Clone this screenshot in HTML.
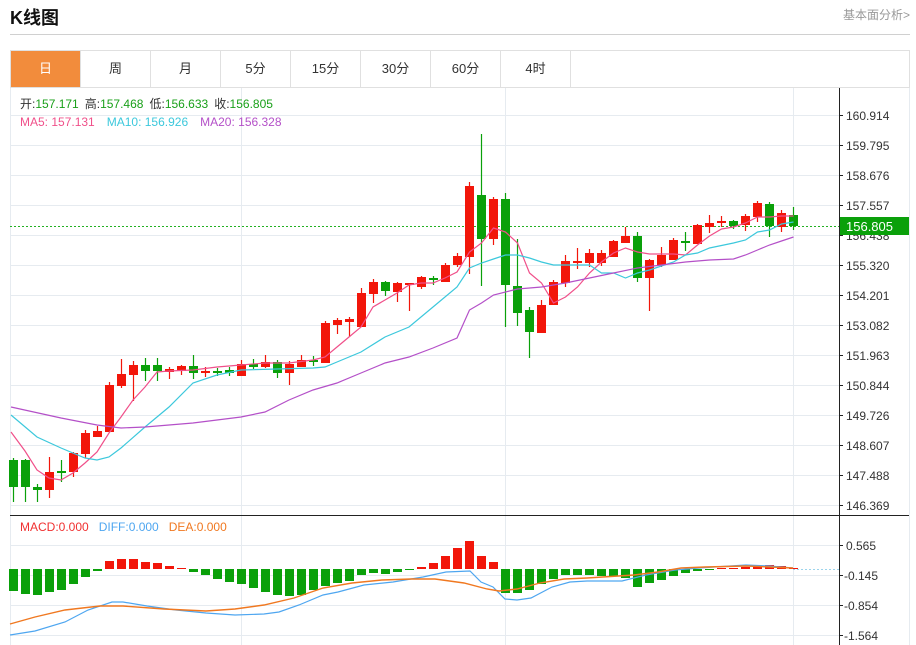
<!DOCTYPE html>
<html><head><meta charset="utf-8"><style>
body{margin:0;width:916px;height:645px;background:#fff;overflow:hidden;position:relative;font-family:"Liberation Sans","Noto Sans CJK SC",sans-serif}
.t{position:absolute;left:10px;top:4px;font-size:18px;font-weight:bold;color:#111}
.r{position:absolute;right:6px;top:6px;font-size:12px;color:#999}
.hl{position:absolute;left:10px;top:34px;width:900px;height:1px;background:#d0d0d0}
.tabs{position:absolute;left:10px;top:50px;width:898px;height:36px;border:1px solid #e0e0e0;display:flex}
.tabs div{width:69px;border-right:1px solid #e0e0e0;text-align:center;line-height:36px;font-size:13px;color:#333}
.tabs div.a{background:#f28c3c;color:#fff}
svg{position:absolute;left:0;top:0}
</style></head><body>
<div class="t">K线图</div><div class="r">基本面分析&gt;</div><div class="hl"></div>
<div class="tabs"><div class="a">日</div><div>周</div><div>月</div><div>5分</div><div>15分</div><div>30分</div><div>60分</div><div>4时</div></div>
<svg width="916" height="645" viewBox="0 0 916 645" font-family="Liberation Sans, Noto Sans CJK SC, sans-serif">
<g stroke="#e6ebf0" stroke-width="1">
<line x1="10" y1="115.5" x2="839" y2="115.5"/><line x1="10" y1="145.5" x2="839" y2="145.5"/><line x1="10" y1="175.5" x2="839" y2="175.5"/><line x1="10" y1="205.5" x2="839" y2="205.5"/><line x1="10" y1="235.5" x2="839" y2="235.5"/><line x1="10" y1="265.5" x2="839" y2="265.5"/><line x1="10" y1="295.5" x2="839" y2="295.5"/><line x1="10" y1="325.5" x2="839" y2="325.5"/><line x1="10" y1="355.5" x2="839" y2="355.5"/><line x1="10" y1="385.5" x2="839" y2="385.5"/><line x1="10" y1="415.5" x2="839" y2="415.5"/><line x1="10" y1="445.5" x2="839" y2="445.5"/><line x1="10" y1="475.5" x2="839" y2="475.5"/><line x1="10" y1="505.5" x2="839" y2="505.5"/>
<line x1="10" y1="545.5" x2="839" y2="545.5"/><line x1="10" y1="575.5" x2="839" y2="575.5"/><line x1="10" y1="605.5" x2="839" y2="605.5"/><line x1="10" y1="635.5" x2="839" y2="635.5"/>
<line x1="241.5" y1="88" x2="241.5" y2="645"/><line x1="505.5" y1="88" x2="505.5" y2="645"/><line x1="793.5" y1="88" x2="793.5" y2="645"/>
<line x1="10.5" y1="88" x2="10.5" y2="645"/><line x1="909.5" y1="88" x2="909.5" y2="645"/>
</g>
<line x1="10" y1="515.5" x2="909" y2="515.5" stroke="#222"/>
<line x1="839.5" y1="88" x2="839.5" y2="645" stroke="#222"/>
<g stroke="#222">
<line x1="839" y1="115.5" x2="843" y2="115.5"/><line x1="839" y1="145.5" x2="843" y2="145.5"/><line x1="839" y1="175.5" x2="843" y2="175.5"/><line x1="839" y1="205.5" x2="843" y2="205.5"/><line x1="839" y1="235.5" x2="843" y2="235.5"/><line x1="839" y1="265.5" x2="843" y2="265.5"/><line x1="839" y1="295.5" x2="843" y2="295.5"/><line x1="839" y1="325.5" x2="843" y2="325.5"/><line x1="839" y1="355.5" x2="843" y2="355.5"/><line x1="839" y1="385.5" x2="843" y2="385.5"/><line x1="839" y1="415.5" x2="843" y2="415.5"/><line x1="839" y1="445.5" x2="843" y2="445.5"/><line x1="839" y1="475.5" x2="843" y2="475.5"/><line x1="839" y1="505.5" x2="843" y2="505.5"/>
<line x1="839" y1="545.5" x2="843" y2="545.5"/><line x1="839" y1="575.5" x2="843" y2="575.5"/><line x1="839" y1="605.5" x2="843" y2="605.5"/><line x1="839" y1="635.5" x2="843" y2="635.5"/>
</g>
<g font-size="12" fill="#333">
<text x="846" y="120">160.914</text><text x="846" y="150">159.795</text><text x="846" y="180">158.676</text><text x="846" y="210">157.557</text><text x="846" y="240">156.438</text><text x="846" y="270">155.320</text><text x="846" y="300">154.201</text><text x="846" y="330">153.082</text><text x="846" y="360">151.963</text><text x="846" y="390">150.844</text><text x="846" y="420">149.726</text><text x="846" y="450">148.607</text><text x="846" y="480">147.488</text><text x="846" y="510">146.369</text>
<text x="846" y="550">0.565</text><text x="844" y="580">-0.145</text><text x="844" y="610">-0.854</text><text x="844" y="640">-1.564</text>
</g>
<line x1="10" y1="226.5" x2="839" y2="226.5" stroke="#22b022" stroke-dasharray="2,2"/>
<rect x="840" y="217" width="69" height="18" fill="#0aa00a"/>
<text x="846" y="231" font-size="13" fill="#fff">156.805</text>
<line x1="793" y1="569.5" x2="839" y2="569.5" stroke="#9cd4ec" stroke-dasharray="2,2"/>
<g font-size="12">
<text x="20" y="108"><tspan fill="#333">开:</tspan><tspan fill="#1aa01a">157.171</tspan><tspan fill="#333" dx="6">高:</tspan><tspan fill="#1aa01a">157.468</tspan><tspan fill="#333" dx="6">低:</tspan><tspan fill="#1aa01a">156.633</tspan><tspan fill="#333" dx="6">收:</tspan><tspan fill="#1aa01a">156.805</tspan></text>
<text x="20" y="126"><tspan fill="#f0508a">MA5: 157.131</tspan><tspan fill="#3cc8dc" dx="12">MA10: 156.926</tspan><tspan fill="#b450c8" dx="12">MA20: 156.328</tspan></text>
<text x="20" y="531"><tspan fill="#f03030">MACD:0.000</tspan><tspan fill="#4ea6f0" dx="10">DIFF:0.000</tspan><tspan fill="#f07820" dx="10">DEA:0.000</tspan></text>
</g>
<!-- red candles -->
<path fill="none" stroke="#f2160a" stroke-width="1.2" d="M49.5 457V498M73.5 452V477M85.5 430V458M97.5 426V437M109.5 382V432M121.5 359V388M133.5 361V401M169.5 367V379M181.5 365V375M205.5 367V377M241.5 360V376M265.5 355V368M289.5 361V385M301.5 355V367M325.5 321V363M337.5 318V334M349.5 317V337M361.5 288V327M373.5 279V303M397.5 282V302M409.5 283V311M421.5 276V289M445.5 263V282M457.5 253V267M469.5 182V274M493.5 197V245M541.5 300V333M553.5 280V305M565.5 255V287M577.5 248V269M589.5 249V267M601.5 250V266M613.5 240V257M625.5 227V243M649.5 259V311M661.5 247V267M673.5 238V260M697.5 224V244M709.5 215V233M721.5 216V227M745.5 214V231M757.5 201V222M781.5 210V232"/>
<g fill="#f2160a">
<rect x="45" y="472" width="9" height="18"/><rect x="69" y="453" width="9" height="19"/><rect x="81" y="433" width="9" height="21"/><rect x="93" y="431" width="9" height="6"/><rect x="105" y="385" width="9" height="47"/><rect x="117" y="374" width="9" height="12"/><rect x="129" y="365" width="9" height="10"/><rect x="165" y="369" width="9" height="3"/><rect x="177" y="366" width="9" height="5"/><rect x="201" y="371" width="9" height="2"/><rect x="237" y="364" width="9" height="12"/><rect x="261" y="362" width="9" height="5"/><rect x="285" y="364" width="9" height="9"/><rect x="297" y="360" width="9" height="7"/><rect x="321" y="323" width="9" height="40"/><rect x="333" y="320" width="9" height="5"/><rect x="345" y="319" width="9" height="3"/><rect x="357" y="293" width="9" height="34"/><rect x="369" y="282" width="9" height="12"/><rect x="393" y="283" width="9" height="9"/><rect x="405" y="283" width="9" height="2"/><rect x="417" y="277" width="9" height="10"/><rect x="441" y="265" width="9" height="17"/><rect x="453" y="256" width="9" height="9"/><rect x="465" y="186" width="9" height="71"/><rect x="489" y="199" width="9" height="40"/><rect x="537" y="305" width="9" height="28"/><rect x="549" y="282" width="9" height="23"/><rect x="561" y="261" width="9" height="22"/><rect x="573" y="261" width="9" height="2"/><rect x="585" y="253" width="9" height="10"/><rect x="597" y="253" width="9" height="10"/><rect x="609" y="241" width="9" height="16"/><rect x="621" y="236" width="9" height="7"/><rect x="645" y="260" width="9" height="18"/><rect x="657" y="255" width="9" height="10"/><rect x="669" y="240" width="9" height="20"/><rect x="693" y="225" width="9" height="19"/><rect x="705" y="223" width="9" height="4"/><rect x="717" y="221" width="9" height="2"/><rect x="741" y="216" width="9" height="9"/><rect x="753" y="203" width="9" height="14"/><rect x="777" y="213" width="9" height="14"/>
</g>
<!-- green candles -->
<path fill="none" stroke="#0aa00a" stroke-width="1.2" d="M13.5 458V502M25.5 459V502M37.5 484V502M61.5 460V482M145.5 358V381M157.5 358V381M193.5 355V379M217.5 368V376M229.5 367V376M253.5 359V369M277.5 360V378M313.5 356V366M385.5 281V296M433.5 276V285M481.5 134V286M505.5 193V327M517.5 239V326M529.5 307V358M637.5 232V282M685.5 232V251M733.5 220V229M769.5 202V237M793.5 207V230"/>
<g fill="#0aa00a">
<rect x="9" y="460" width="9" height="27"/><rect x="21" y="460" width="9" height="27"/><rect x="33" y="487" width="9" height="3"/><rect x="57" y="471" width="9" height="2"/><rect x="141" y="365" width="9" height="6"/><rect x="153" y="365" width="9" height="6"/><rect x="189" y="366" width="9" height="7"/><rect x="213" y="371" width="9" height="2"/><rect x="225" y="370" width="9" height="3"/><rect x="249" y="364" width="9" height="3"/><rect x="273" y="362" width="9" height="11"/><rect x="309" y="360" width="9" height="2"/><rect x="381" y="282" width="9" height="9"/><rect x="429" y="278" width="9" height="2"/><rect x="477" y="195" width="9" height="44"/><rect x="501" y="199" width="9" height="86"/><rect x="513" y="286" width="9" height="27"/><rect x="525" y="310" width="9" height="22"/><rect x="633" y="236" width="9" height="42"/><rect x="681" y="241" width="9" height="2"/><rect x="729" y="221" width="9" height="5"/><rect x="765" y="204" width="9" height="22"/><rect x="789" y="215" width="9" height="11"/>
</g>
<!-- MACD bars -->
<g fill="#0aa00a">
<rect x="9" y="569" width="9" height="22"/><rect x="21" y="569" width="9" height="25"/><rect x="33" y="569" width="9" height="26"/><rect x="45" y="569" width="9" height="23"/><rect x="57" y="569" width="9" height="21"/><rect x="69" y="569" width="9" height="15"/><rect x="81" y="569" width="9" height="8"/><rect x="93" y="569" width="9" height="2"/>
<rect x="189" y="569" width="9" height="3"/><rect x="201" y="569" width="9" height="6"/><rect x="213" y="569" width="9" height="10"/><rect x="225" y="569" width="9" height="13"/><rect x="237" y="569" width="9" height="15"/><rect x="249" y="569" width="9" height="19"/><rect x="261" y="569" width="9" height="23"/><rect x="273" y="569" width="9" height="26"/><rect x="285" y="569" width="9" height="27"/><rect x="297" y="569" width="9" height="26"/><rect x="309" y="569" width="9" height="21"/><rect x="321" y="569" width="9" height="17"/><rect x="333" y="569" width="9" height="14"/><rect x="345" y="569" width="9" height="12"/><rect x="357" y="569" width="9" height="6"/><rect x="369" y="569" width="9" height="4"/><rect x="381" y="569" width="9" height="5"/><rect x="393" y="569" width="9" height="3"/><rect x="405" y="569" width="9" height="1"/>
<rect x="501" y="569" width="9" height="24"/><rect x="513" y="569" width="9" height="24"/><rect x="525" y="569" width="9" height="21"/><rect x="537" y="569" width="9" height="15"/><rect x="549" y="569" width="9" height="10"/><rect x="561" y="569" width="9" height="6"/><rect x="573" y="569" width="9" height="6"/><rect x="585" y="569" width="9" height="6"/><rect x="597" y="569" width="9" height="7"/><rect x="609" y="569" width="9" height="7"/><rect x="621" y="569" width="9" height="9"/><rect x="633" y="569" width="9" height="18"/><rect x="645" y="569" width="9" height="14"/><rect x="657" y="569" width="9" height="11"/><rect x="669" y="569" width="9" height="7"/><rect x="681" y="569" width="9" height="4"/><rect x="693" y="569" width="9" height="2"/><rect x="705" y="569" width="9" height="1"/>
</g>
<g fill="#f2160a">
<rect x="105" y="561" width="9" height="8"/><rect x="117" y="559" width="9" height="10"/><rect x="129" y="559" width="9" height="10"/><rect x="141" y="562" width="9" height="7"/><rect x="153" y="563" width="9" height="6"/><rect x="165" y="566" width="9" height="3"/><rect x="177" y="568" width="9" height="1"/>
<rect x="417" y="567" width="9" height="2"/><rect x="429" y="563" width="9" height="6"/><rect x="441" y="556" width="9" height="13"/><rect x="453" y="548" width="9" height="21"/><rect x="465" y="541" width="9" height="28"/><rect x="477" y="556" width="9" height="13"/><rect x="489" y="562" width="9" height="7"/>
<rect x="717" y="568" width="9" height="1"/><rect x="729" y="568" width="9" height="1"/><rect x="741" y="567" width="9" height="2"/><rect x="753" y="566" width="9" height="3"/><rect x="765" y="565" width="9" height="4"/><rect x="777" y="566" width="9" height="3"/><rect x="789" y="568" width="9" height="1"/>
</g>
<polyline fill="none" stroke="#f0508a" stroke-width="1.2" points="11,432 25,451 37,470 49,478 61,480 73,473 85,463 97,452 109,433 121,417 133,400 145,387 157,372 169,371 193,370 217,367 241,365 265,363 289,363 313,360 325,357 337,347 349,337 361,327 373,307 385,300 397,293 409,285 421,283 433,283 445,278 457,272 469.5,252 481.5,243 493.5,228 505.5,232 517.5,243 529.5,273 541.5,283 553.5,303 565.5,297 577.5,287 589.5,273 601.5,262 613.5,253 625.5,248 637.5,252 649.5,254 673.5,254 685.5,255 697.5,245 709.5,236 721.5,229 733.5,227 745.5,223 757.5,217 769.5,217 781.5,216 793.5,216"/>
<polyline fill="none" stroke="#3cc8dc" stroke-width="1.2" points="11,415 37,437 61,448 85,458 97,460 109,457 121,448 145,427 169,407 193,383 217,375 241,370 313,368 325,367 337,362 361,352 385,337 409,327 433,307 457,287 469.5,268 481.5,263 493.5,259 505.5,255 517.5,255 529.5,258 541.5,262 553.5,265 589.5,265 601.5,273 613.5,273 625.5,278 637.5,273 649.5,270 673.5,262 685.5,255 697.5,253 709.5,248 733.5,243 745.5,240 757.5,232 769.5,230 781.5,224 793.5,222"/>
<polyline fill="none" stroke="#b450c8" stroke-width="1.2" points="11,407 61,418 97,425 121,428 145,427 169,425 193,423 217,420 241,417 265,412 289,400 313,390 337,383 361,373 385,363 409,357 433,348 457,338 469.5,310 481.5,303 493.5,295 517.5,289 541.5,287 565.5,283 589.5,278 613.5,273 637.5,268 661.5,265 685.5,262 709.5,260 733.5,259 745.5,255 757.5,250 769.5,245 781.5,241 793.5,237"/>
<polyline fill="none" stroke="#4ea6f0" stroke-width="1.2" points="10,635 35,631 65,622 88,610 112,602 123,602 147,606 176,610 206,613 235,615 264,614 279,612 299,605 323,595 338,592 364,585 393,582 423,577 446,572 470,571 481,582 493,587 505,599 517,600 531,598 552,587 570,582 587,581 622,581 646,575 675,570 699,568 746,565 769,566 793,568"/>
<polyline fill="none" stroke="#f07820" stroke-width="1.4" points="10,624 35,617 65,610 100,606 123,606 164,609 206,611 235,609 264,605 294,598 323,588 352,583 382,580 411,579 435,579 464,583 487,589 499,591 517,589 540,583 564,579 587,578 634,575 658,572 681,568 705,567 746,566 793,568"/>
</svg>
</body></html>
